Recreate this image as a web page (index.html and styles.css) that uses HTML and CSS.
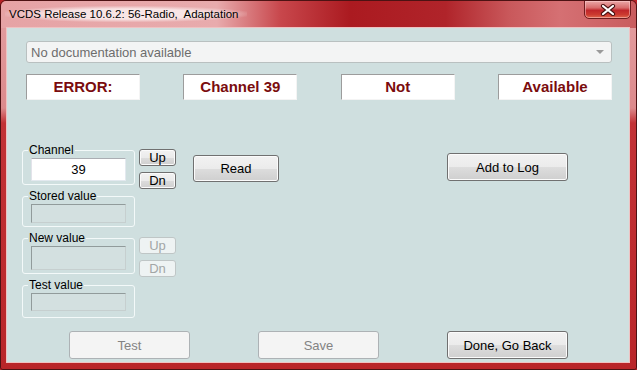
FILE: index.html
```html
<!DOCTYPE html>
<html lang="en">
<head>
    <meta charset="UTF-8">
    <meta name="viewport" content="width=device-width, initial-scale=1.0">
    <title>VCDS Adaptation</title>
    <link rel="stylesheet" href="styles.css">
</head>
<body>
    <div class="window">
        <div class="titlebar">
            <span class="title">VCDS Release 10.6.2: 56-Radio,&nbsp; Adaptation</span>
            <button class="close" aria-label="Close">
                <svg width="16" height="12" viewBox="0 0 16 12">
                    <path d="M3 2 L13 10 M13 2 L3 10" stroke="#4a1212" stroke-width="4.2" stroke-linecap="round"/>
                    <path d="M3 2 L13 10 M13 2 L3 10" stroke="#fff" stroke-width="2.2" stroke-linecap="round"/>
                </svg>
            </button>
        </div>
        <div class="frame">
            <div class="client">
                <div class="combo">
                    <span>No documentation available</span>
                    <span class="combo-arrow"></span>
                </div>

                <div class="status">
                    <div class="status-box">ERROR:</div>
                    <div class="status-box">Channel 39</div>
                    <div class="status-box">Not</div>
                    <div class="status-box">Available</div>
                </div>

                <div class="main">
                    <div class="groups">
                        <fieldset class="group">
                            <legend>Channel</legend>
                            <input class="field field-channel" type="text" value="39">
                        </fieldset>
                        <fieldset class="group">
                            <legend>Stored value</legend>
                            <input class="field" type="text" disabled>
                        </fieldset>
                        <fieldset class="group">
                            <legend>New value</legend>
                            <input class="field field-new" type="text" disabled>
                        </fieldset>
                        <fieldset class="group group-last">
                            <legend>Test value</legend>
                            <input class="field field-test" type="text" disabled>
                        </fieldset>
                    </div>

                    <div class="spinners">
                        <div class="spin">
                            <button class="btn btn-small">Up</button>
                            <button class="btn btn-small">Dn</button>
                        </div>
                        <div class="spin spin-new">
                            <button class="btn btn-small" disabled>Up</button>
                            <button class="btn btn-small" disabled>Dn</button>
                        </div>
                    </div>

                    <button class="btn btn-read">Read</button>
                    <button class="btn btn-wide btn-log">Add to Log</button>
                </div>

                <div class="actions">
                    <button class="btn btn-wide" disabled>Test</button>
                    <button class="btn btn-wide" disabled>Save</button>
                    <button class="btn btn-wide">Done, Go Back</button>
                </div>
            </div>
        </div>
    </div>
</body>
</html>
```

FILE: styles.css
```css
* {
    box-sizing: border-box;
}
body {
    margin: 0;
    width: 637px;
    height: 370px;
    overflow: hidden;
    font-family: "Liberation Sans", Arial, sans-serif;
    background-color: #b62126;
}
.window {
    width: 637px;
    height: 370px;
    display: flex;
    flex-direction: column;
    border: 1px solid #4d1213;
    border-radius: 6px 6px 3px 3px;
    overflow: hidden;
}
.titlebar {
    height: 27px;
    display: flex;
    justify-content: space-between;
    align-items: flex-start;
    padding-left: 4px;
    background: linear-gradient(90deg, #e6a3a5 0%, #e8abad 34%, #c8474c 44%, #ab1a20 55%, #b0242a 70%, #c9585b 80%, #d57073 88%, #c95c5e 100%);
}
.title {
    margin-top: 5px;
    padding: 1px 8px 1px 4px;
    font-size: 11.5px;
    line-height: 14px;
    color: #000;
    background: radial-gradient(ellipse at center, rgba(255, 255, 255, 0.7) 45%, rgba(255, 255, 255, 0) 75%);
}
.close {
    width: 47px;
    height: 19px;
    margin-top: -1px;
    margin-right: 5px;
    padding: 0;
    display: flex;
    justify-content: center;
    align-items: center;
    border: 1px solid #6e1c1e;
    border-radius: 0 0 5px 5px;
    background: linear-gradient(180deg, #eba8a8 0%, #d86c6c 40%, #c0262a 55%, #cc3a30 80%, #e0684c 100%);
    box-shadow: inset 0 0 0 1px rgba(255, 210, 210, 0.5);
}
.frame {
    flex: 1;
    display: flex;
    padding: 0 7px 7px 6px;
    background: linear-gradient(180deg, #e29a9c 0, #dc8a8c 80px, #c23236 95px, #b92529 100%);
}
.client {
    flex: 1;
    display: flex;
    flex-direction: column;
    padding: 13px 0 3px;
    background-color: #cfdfdf;
    box-shadow: 0 0 0 1px #efc2c2;
}
.combo {
    margin-left: 19px;
    width: 586px;
    height: 22px;
    display: flex;
    justify-content: space-between;
    align-items: center;
    padding: 0 7px 0 4px;
    border: 1px solid #b9c0c0;
    border-radius: 3px;
    background-color: #f3f4f4;
    color: #6d6d6d;
    font-size: 13px;
}
.combo-arrow {
    width: 0;
    height: 0;
    border-left: 4px solid transparent;
    border-right: 4px solid transparent;
    border-top: 4px solid #9a9a9a;
}
.status {
    margin: 11px 0 0 19px;
    width: 586px;
    display: flex;
    justify-content: space-between;
}
.status-box {
    width: 114px;
    height: 26px;
    line-height: 24px;
    text-align: center;
    background-color: #fff;
    border-top: 1px solid #9c9c9c;
    border-left: 1px solid #9c9c9c;
    border-right: 1px solid #f4f4f4;
    border-bottom: 1px solid #f4f4f4;
    color: #7a0c0e;
    font-size: 15px;
    font-weight: bold;
}
.main {
    display: flex;
    align-items: flex-start;
    margin-top: 43px;
    padding-left: 15px;
}
.groups {
    width: 113px;
    display: flex;
    flex-direction: column;
}
.group {
    margin: 0;
    min-width: 0;
    padding: 1px 8px 3px;
    border: 1px solid #f3f9f9;
    border-radius: 3px;
}
.group + .group {
    margin-top: 4px;
}
.group-last {
    padding-bottom: 6px;
}
.group legend {
    margin-left: -3px;
    padding: 0 1px;
    font-size: 12px;
    line-height: 14px;
    color: #000;
}
.field {
    display: block;
    width: 95px;
    height: 19px;
    padding: 0;
    border: 1px solid;
    font-family: "Liberation Sans", Arial, sans-serif;
    font-size: 13px;
    text-align: center;
    color: #000;
}
.field-channel {
    height: 23px;
    background-color: #fff;
    border-color: #abadb3 #e3e9ef #e3e9ef #e2e3ea;
}
.field:disabled {
    background-color: #d3e0e0;
    border-color: #919b9b #c6cfcf #c6cfcf #919b9b;
}
.field-new {
    height: 24px;
}
.field-test {
    height: 18px;
}
.spinners {
    margin: 6px 0 0 4px;
    display: flex;
    flex-direction: column;
}
.spin {
    display: flex;
    flex-direction: column;
    gap: 6px;
}
.spin-new {
    margin-top: 48px;
}
.btn {
    padding: 0;
    border: 1px solid #707070;
    border-radius: 3px;
    background: linear-gradient(180deg, #f2f2f2 0%, #ebebeb 50%, #dddddd 51%, #cfcfcf 100%);
    box-shadow: inset 0 0 0 1px #fbfbfb;
    font-family: "Liberation Sans", Arial, sans-serif;
    font-size: 13px;
    color: #000;
}
.btn:disabled {
    border-color: #adb2b5;
    background: #f4f4f4;
    box-shadow: none;
    color: #838383;
}
.btn-small {
    width: 37px;
    height: 17px;
    line-height: 15px;
    font-size: 13px;
}
.btn-small:disabled {
    border-color: #bfc6c6;
    background: #eef3f3;
    color: #a2a6a6;
}
.btn-read {
    width: 86px;
    height: 27px;
    margin: 12px 0 0 17px;
}
.btn-wide {
    width: 121px;
    height: 28px;
}
.btn-log {
    margin: 10px 0 0 168px;
}
.actions {
    margin-top: auto;
    padding-left: 62px;
    display: flex;
    gap: 68px;
}
```
